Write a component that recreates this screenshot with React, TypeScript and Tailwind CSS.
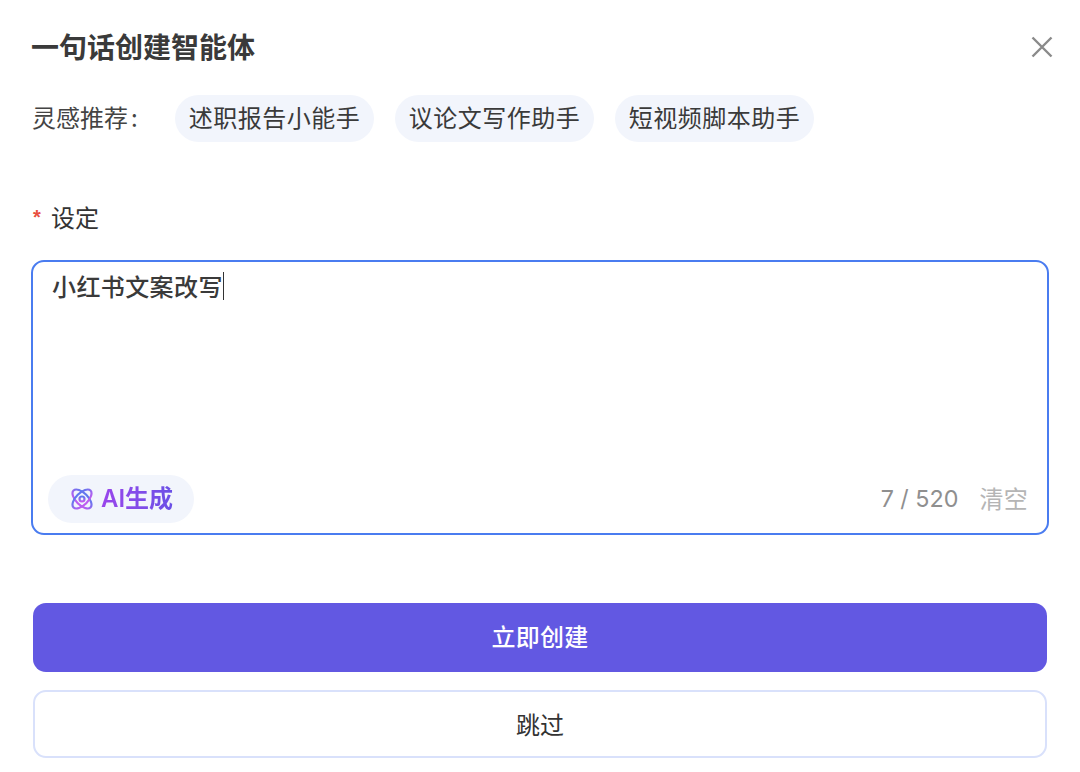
export default function App() {
  return (
    <div className="w-[1080px] h-[772px] overflow-hidden bg-white pl-[32px] pr-[32px] pt-[30px] font-['Noto_Sans_CJK_SC',sans-serif]">
      <div className="flex items-center justify-between h-[34px]">
        <h1 className="text-[28px] leading-[34px] font-bold text-[#3a3a3a] -ml-px pb-[2px]">一句话创建智能体</h1>
        <svg width="24" height="24" viewBox="0 0 24 24" className="-mr-[6px] text-[#8a8a8a]" fill="none" stroke="currentColor" strokeWidth="2.4">
          <path d="M2.5 2.5 L21.5 21.5 M21.5 2.5 L2.5 21.5" />
        </svg>
      </div>
      <div className="flex items-center mt-[31px] h-[47px]">
        <span className="text-[24px] text-[#444444] w-[143px] leading-[43px] pb-[4px] whitespace-pre">灵感推荐<span className="ml-[3px]">:</span></span>
        <div className="flex gap-[21px]">
          {["述职报告小能手", "议论文写作助手", "短视频脚本助手"].map((t) => (
            <span key={t} className="h-[47px] w-[199px] rounded-full bg-[#f2f5fc] text-[24px] leading-[43px] tracking-[0.5px] text-center text-[#3a3a3a] whitespace-nowrap">{t}</span>
          ))}
        </div>
      </div>
      <div className="flex items-center mt-[57px] h-[36px]">
        <span className="text-[20px] font-bold text-[#e8503f] w-[19px] pl-[1px] font-['Liberation_Sans',sans-serif] leading-[36px]">*</span>
        <span className="text-[24px] text-[#333333] leading-[36px]">设定</span>
      </div>
      <div className="mt-[25px] w-[1018px] h-[275px] rounded-[13px] border-2 border-[#4a7cf0] flex flex-col justify-between pl-[15px] pr-[19px] pb-[10px] pt-[6px] -ml-px">
        <div className="flex items-center pl-[4px] h-[36px]">
          <span className="text-[24px] leading-[36px] font-medium tracking-[0.4px] text-[#3a3a3a]">小红书文案改写</span>
          <span className="w-px h-[28px] bg-[#333333]" />
        </div>
        <div className="flex items-center justify-between">
          <div className="h-[48px] w-[146px] rounded-full bg-[#f2f5fc] flex items-center justify-center gap-[6px]">
            <svg width="26" height="26" viewBox="0 0 26 26" fill="none" strokeWidth="2.2">
              <defs>
                <linearGradient id="g" x1="0" y1="0" x2="0" y2="1">
                  <stop offset="0" stopColor="#5f78ee" />
                  <stop offset="1" stopColor="#c05cf0" />
                </linearGradient>
              </defs>
              <g stroke="url(#g)">
                <ellipse cx="13" cy="13" rx="12" ry="6" transform="rotate(45 13 13)" />
                <ellipse cx="13" cy="13" rx="12" ry="6" transform="rotate(-45 13 13)" />
                <circle cx="13" cy="13" r="2.5" />
              </g>
            </svg>
            <span className="text-[24px] font-['Inter','Noto_Sans_CJK_SC',sans-serif] font-semibold bg-gradient-to-r from-[#9a45ec] to-[#6a50e6] bg-clip-text text-transparent leading-[32px] mb-[1px]">AI生成</span>
          </div>
          <div className="flex items-center gap-[21px]">
            <span className="text-[23.3px] font-['Inter',sans-serif] text-[#8f8f8f]">7 / 520</span>
            <span className="text-[24px] tracking-[0.3px] text-[#b5b5b5] mb-[3px]">清空</span>
          </div>
        </div>
      </div>
      <button className="mt-[68px] ml-px block w-[1014px] h-[69px] pb-[3px] rounded-[13px] bg-[#6258e2] text-white text-[24px] font-medium tracking-[0.2px]">立即创建</button>
      <button className="mt-[18px] ml-px block w-[1014px] h-[68px] pb-[1px] rounded-[13px] border-2 border-[#d9e1fb] bg-white text-[#333333] text-[24px] font-normal">跳过</button>
    </div>
  );
}
